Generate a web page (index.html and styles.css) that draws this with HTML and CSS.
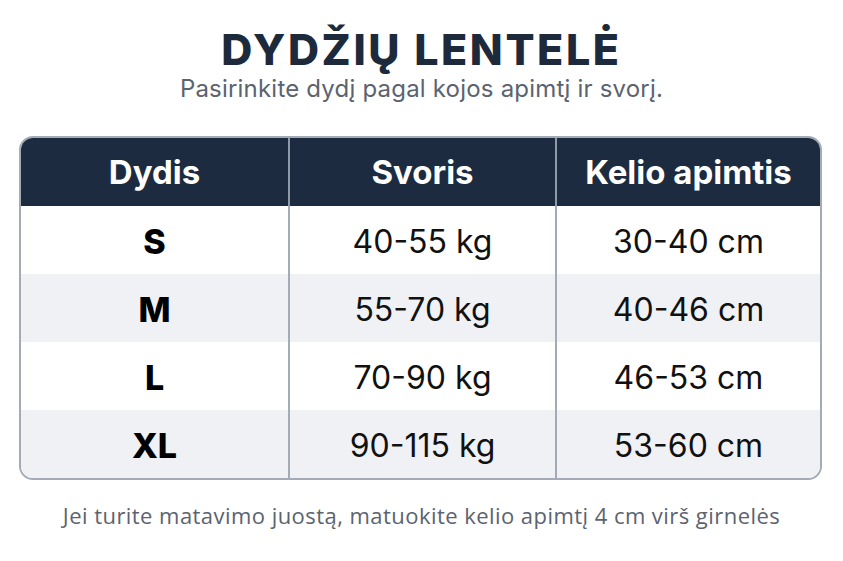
FILE: index.html
```html
<!DOCTYPE html>
<html lang="lt">
<head>
<meta charset="utf-8">
<link rel="stylesheet" href="styles.css">
</head>
<body>
<div class="page">
  <h1 class="title">DYDŽIŲ LENTELĖ</h1>
  <p class="subtitle">Pasirinkite dydį pagal kojos apimtį ir svorį.</p>
  <div class="table">
    <div class="row head">
      <div class="cell">Dydis</div>
      <div class="cell">Svoris</div>
      <div class="cell">Kelio apimtis</div>
    </div>
    <div class="row">
      <div class="cell size">S</div>
      <div class="cell">40-55 kg</div>
      <div class="cell">30-40 cm</div>
    </div>
    <div class="row alt">
      <div class="cell size">M</div>
      <div class="cell">55-70 kg</div>
      <div class="cell">40-46 cm</div>
    </div>
    <div class="row">
      <div class="cell size">L</div>
      <div class="cell">70-90 kg</div>
      <div class="cell">46-53 cm</div>
    </div>
    <div class="row alt">
      <div class="cell size">XL</div>
      <div class="cell">90-115 kg</div>
      <div class="cell">53-60 cm</div>
    </div>
  </div>
  <p class="note">Jei turite matavimo juostą, matuokite kelio apimtį 4 cm virš girnelės</p>
</div>
</body>
</html>
```
FILE: styles.css
```css
* { box-sizing: border-box; margin: 0; padding: 0; }
html, body { background: #ffffff; }
body { width: 843px; height: 561px; overflow: hidden; font-family: Inter, "Noto Sans", sans-serif; }
.page { display: flex; flex-direction: column; align-items: center; padding-top: 24px; }
.title { font-size: 43px; font-weight: 800; color: #1d2a3b; letter-spacing: 2.6px; line-height: 50px; }
.subtitle { font-size: 24px; color: #5b6370; line-height: 30px; margin-top: 0; letter-spacing: 0.2px; }
.table { width: 803px; margin-top: 32px; margin-right: 2px; border: 2px solid #a3abb6; border-radius: 14px; overflow: hidden; }
.row { display: grid; grid-template-columns: 267px 267px 1fr; height: 68px; background: #ffffff; }
.row.alt { background: #eff1f5; }
.row.head { background: #1c2b40; height: 68px; }
.cell { display: flex; align-items: center; justify-content: center; font-size: 32px; color: #111111; border-left: 2px solid #a3abb6; padding-top: 3px; }
.cell:first-child { border-left: none; }
.head .cell { color: #ffffff; font-weight: 700; font-size: 33px; border-left-color: #8f9aa8; padding-top: 0; }
.cell.size { font-weight: 800; font-size: 34px; color: #000; }
.note { font-family: "Open Sans", sans-serif; font-size: 22px; color: #5b6370; margin-top: 20px; letter-spacing: 0.45px; }
```
